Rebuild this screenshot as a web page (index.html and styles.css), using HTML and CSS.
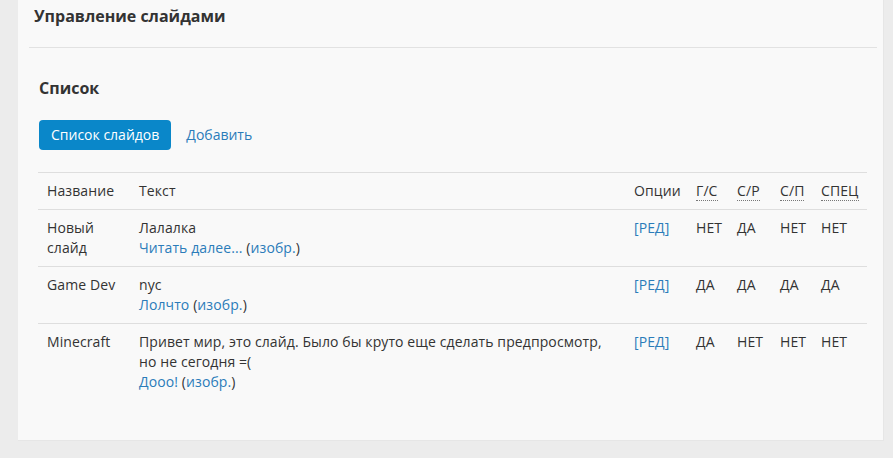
FILE: index.html
```html
<!DOCTYPE html>
<html lang="ru">

<head>
  <meta charset="UTF-8">
  <title>Управление слайдами</title>
  <link rel="stylesheet" href="styles.css">
</head>

<body>
  <div class="panel">
    <div class="panel-header">
      <h2>Управление слайдами</h2>
    </div>

    <div class="panel-body">
      <h3>Список</h3>

      <div class="tabs">
        <a class="tab active" href="#">Список слайдов</a>
        <a class="tab" href="#">Добавить</a>
      </div>

      <table class="slides">
        <colgroup>
          <col class="c-name">
          <col class="c-text">
          <col class="c-opt">
          <col class="c-gs">
          <col class="c-sr">
          <col class="c-sp">
          <col class="c-spec">
        </colgroup>
        <thead>
          <tr>
            <th>Название</th>
            <th>Текст</th>
            <th>Опции</th>
            <th class="flag"><abbr title="Главная страница">Г/С</abbr></th>
            <th class="flag"><abbr title="Страница раздела">С/Р</abbr></th>
            <th class="flag"><abbr title="Страница пользователя">С/П</abbr></th>
            <th class="flag"><abbr title="Специальный">СПЕЦ</abbr></th>
          </tr>
        </thead>
        <tbody>
          <tr>
            <td>Новый слайд</td>
            <td>Лалалка<br><a href="#">Читать далее...</a> (<a href="#">изобр.</a>)</td>
            <td><a href="#">[РЕД]</a></td>
            <td class="flag">НЕТ</td>
            <td class="flag">ДА</td>
            <td class="flag">НЕТ</td>
            <td class="flag">НЕТ</td>
          </tr>
          <tr>
            <td>Game Dev</td>
            <td>nyc<br><a href="#">Лолчто</a> (<a href="#">изобр.</a>)</td>
            <td><a href="#">[РЕД]</a></td>
            <td class="flag">ДА</td>
            <td class="flag">ДА</td>
            <td class="flag">ДА</td>
            <td class="flag">ДА</td>
          </tr>
          <tr>
            <td>Minecraft</td>
            <td>Привет мир, это слайд. Было бы круто еще сделать предпросмотр, но не сегодня =(<br><a href="#">Дooo!</a> (<a href="#">изобр.</a>)</td>
            <td><a href="#">[РЕД]</a></td>
            <td class="flag">ДА</td>
            <td class="flag">НЕТ</td>
            <td class="flag">НЕТ</td>
            <td class="flag">НЕТ</td>
          </tr>
        </tbody>
      </table>
    </div>
  </div>
</body>

</html>
```

FILE: styles.css
```css
body {
  margin: 0;
  font-family: 'Open Sans', 'Noto Sans', sans-serif;
  font-size: 14px;
  line-height: 20px;
  color: #333;
  background-color: #ececec;
}

a {
  color: #2b7cb9;
  text-decoration: none;
}

.panel {
  margin-left: 18px;
  width: 866px;
  height: 441px;
  box-sizing: border-box;
  background-color: #f9f9f9;
  border-right: 1px solid #e6e6e6;
  border-bottom: 1px solid #e6e6e6;
}

.panel-header {
  margin: 0 6px 0 11px;
  padding: 6px 5px 20px;
  border-bottom: 1px solid #e2e2e2;
}

.panel-header h2 {
  margin: 0;
  font-size: 16px;
  line-height: 21px;
  font-weight: bold;
  color: #333;
}

.panel-body {
  padding: 29px 17px 0 20px;
}

.panel-body h3 {
  margin: 0 0 21px 1px;
  font-size: 16px;
  line-height: 22px;
  font-weight: bold;
}

.tabs {
  display: flex;
  align-items: center;
  gap: 15px;
  margin-left: 1px;
}

.tab {
  padding: 5px 0;
}

.tab.active {
  padding: 5px 12px;
  color: #fff;
  background-color: #0a87c9;
  border-radius: 4px;
}

.slides {
  width: 829px;
  margin-top: 22px;
  border-collapse: collapse;
  table-layout: fixed;
  letter-spacing: 0.1px;
}

.slides th,
.slides td {
  padding: 8px 8px 8px 9px;
  text-align: left;
  vertical-align: top;
  border-top: 1px solid #dedede;
  font-weight: normal;
}

.slides .flag {
  padding-right: 0;
  padding-left: 8px;
}

.slides abbr {
  text-decoration: none;
  border-bottom: 1px dotted #777;
}

.c-name { width: 92px; }
.c-text { width: 495px; }
.c-opt { width: 63px; }
.c-gs { width: 41px; }
.c-sr { width: 43px; }
.c-sp { width: 41px; }
.c-spec { width: 54px; }
```
